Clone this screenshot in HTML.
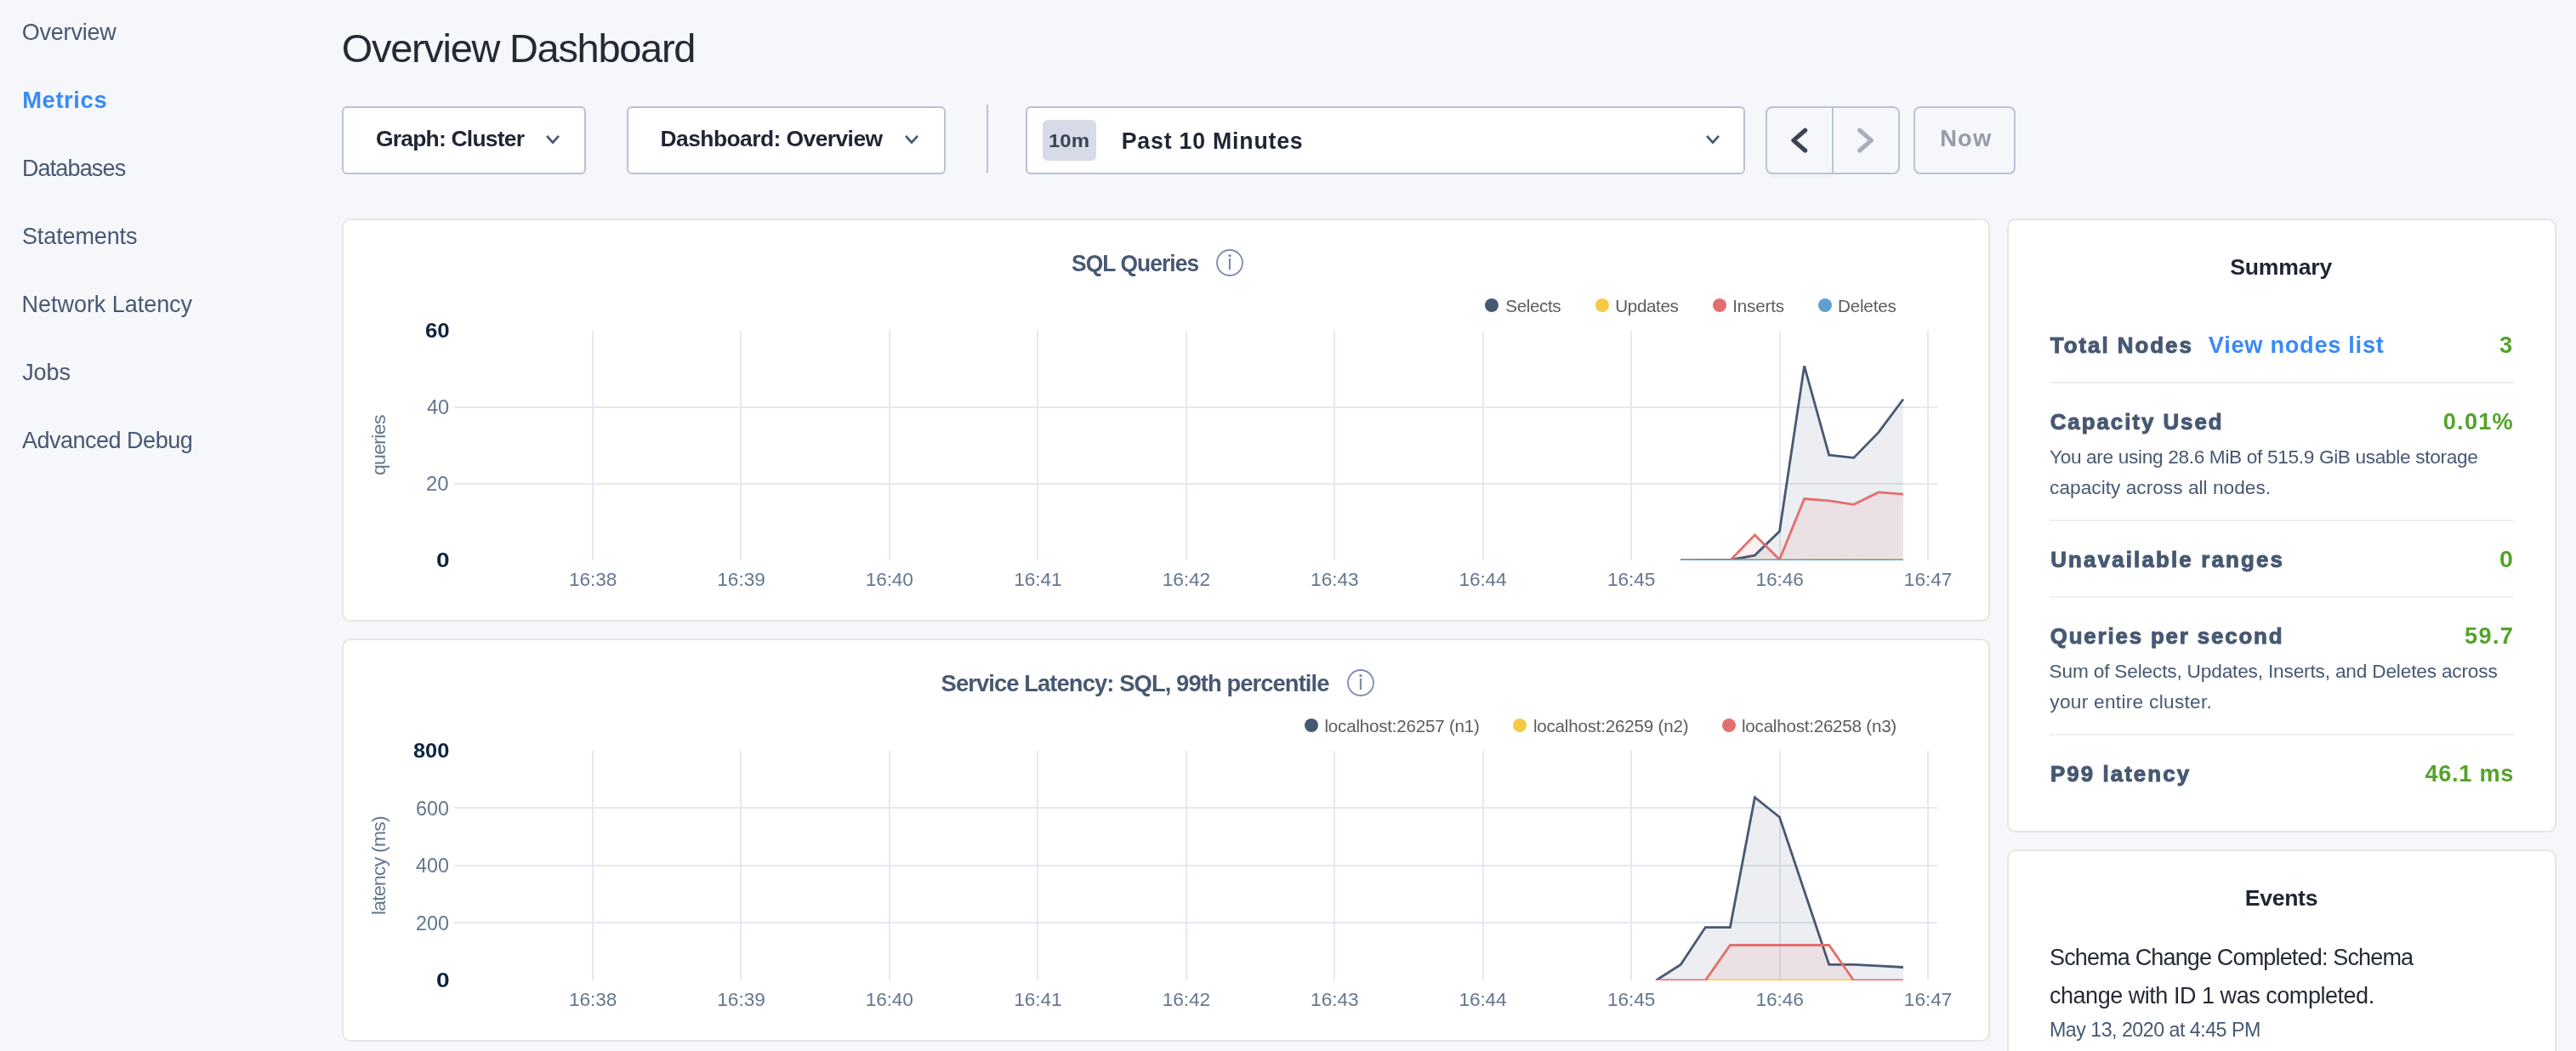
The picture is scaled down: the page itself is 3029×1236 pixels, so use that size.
<!DOCTYPE html>
<html lang="en">
<head>
<meta charset="utf-8">
<title>Overview Dashboard | Cockroach Console</title>
<style>
html,body{margin:0;padding:0}
html{width:3029px;height:1236px;overflow:hidden}
body{width:3029px;height:1236px;overflow:hidden;background:#f5f7fa;font-family:"Liberation Sans", sans-serif;position:relative}
.t{position:absolute;margin:0;white-space:nowrap;line-height:1;font-weight:400;text-decoration:none;transform-origin:0 0;display:block}
.ic{position:absolute;overflow:visible}
.box{position:absolute;box-sizing:border-box;background:#fff;border:2px solid #b9c1d6;border-radius:6px}
.card{position:absolute;box-sizing:border-box;background:#fff;border:2px solid #e5e5e6;border-radius:10px}
.hr{position:absolute;left:2410px;width:546px;height:2px;background:#efeff0}
.dot{position:absolute;width:16.2px;height:16.2px;border-radius:50%;display:block}
nav,main,section,header{display:block}
</style>
</head>
<body>
<nav style="will-change:transform;position:absolute;left:0;top:0;width:380px;height:1236px;overflow:hidden;z-index:1">
<a class="t" style="left:25.73px;top:25px;font-size:27.03px;color:#475872;letter-spacing:-0.215px;">Overview</a>
<a class="t" style="left:26.19px;top:104px;font-size:27.33px;color:#3a8af6;font-weight:700;letter-spacing:0.62px;">Metrics</a>
<a class="t" style="left:25.89px;top:185px;font-size:27.03px;color:#475872;letter-spacing:-0.858px;">Databases</a>
<a class="t" style="left:25.96px;top:265px;font-size:27.03px;color:#475872;letter-spacing:-0.125px;">Statements</a>
<a class="t" style="left:25.59px;top:345px;font-size:27.03px;color:#475872;letter-spacing:-0.05px;">Network Latency</a>
<a class="t" style="left:26.18px;top:425px;font-size:27.03px;color:#475872;letter-spacing:-0.109px;">Jobs</a>
<a class="t" style="left:26.0px;top:505px;font-size:27.03px;color:#475872;letter-spacing:-0.505px;">Advanced Debug</a>
</nav>
<main style="will-change:transform;position:absolute;left:0;top:0;width:3029px;height:1236px;overflow:hidden">
<header>
<h1 class="t" style="left:401.7px;top:34px;font-size:46.95px;color:#242a35;letter-spacing:-1.268px;">Overview Dashboard</h1>
</header>
<section class="toolbar">
<div class="box" style="left:402px;top:125px;width:287px;height:80px"></div>
<div class="box" style="left:737px;top:125px;width:375px;height:80px"></div>
<div style="position:absolute;left:1160px;top:123px;width:2px;height:80px;background:#b9c1d6"></div>
<div class="box" style="left:1206px;top:125px;width:846px;height:80px"></div>
<div style="position:absolute;left:1226.1px;top:140.9px;width:62.8px;height:48px;border-radius:6px;background:#d6dbe7"></div>
<div style="position:absolute;left:2078px;top:196px;width:77px;height:10px;border-radius:0 0 0 8px;box-shadow:0 3px 5px rgba(60,70,100,0.04)"></div>
<div class="box" style="left:2076px;top:125px;width:157.6px;height:80px;background:#f5f7fa;border-radius:8px;border-color:#bbc2d7"></div>
<div style="position:absolute;left:2154.1px;top:126px;width:1.8px;height:78px;background:#bac2d6"></div>
<div class="box" style="left:2250.2px;top:125px;width:119.4px;height:80px;background:#f5f7fa;border-radius:8px;border-color:#bbc2d7"></div>
<svg class="ic" style="left:638.0px;top:154.0px" width="24" height="20" viewBox="-12 -10 24 20"><path d="M-6.95 -4.15 L0 3.65 L6.95 -4.15" fill="none" stroke="#475872" stroke-width="2.8" stroke-linecap="butt" stroke-linejoin="round"/></svg>
<svg class="ic" style="left:1060.1px;top:154.0px" width="24" height="20" viewBox="-12 -10 24 20"><path d="M-6.95 -4.15 L0 3.65 L6.95 -4.15" fill="none" stroke="#475872" stroke-width="2.8" stroke-linecap="butt" stroke-linejoin="round"/></svg>
<svg class="ic" style="left:2002.0px;top:154.0px" width="24" height="20" viewBox="-12 -10 24 20"><path d="M-6.95 -4.15 L0 3.65 L6.95 -4.15" fill="none" stroke="#475872" stroke-width="2.8" stroke-linecap="butt" stroke-linejoin="round"/></svg>
<svg class="ic" style="left:2095px;top:140px" width="120" height="50" viewBox="2095 140 120 50">
<path d="M2122.6 153.2 L2108.9 165.1 L2122.6 177" fill="none" stroke="#394455" stroke-width="5.2" stroke-linecap="round" stroke-linejoin="round"/>
<path d="M2186.7 153.2 L2200.4 165.1 L2186.7 177" fill="none" stroke="#a9aeba" stroke-width="5.2" stroke-linecap="round" stroke-linejoin="round"/>
</svg>
<span class="t" style="left:441.97px;top:150px;font-size:26.45px;color:#1f2533;font-weight:700;letter-spacing:-0.775px;">Graph: Cluster</span>
<span class="t" style="left:776.55px;top:150px;font-size:26.45px;color:#1f2533;font-weight:700;letter-spacing:-0.571px;">Dashboard: Overview</span>
<span class="t" style="left:1232.8px;top:155px;font-size:22.09px;color:#394455;font-weight:700;transform:scaleX(1.0848);">10m</span>
<span class="t" style="left:1318.73px;top:153px;font-size:26.74px;color:#1f2533;font-weight:700;letter-spacing:0.782px;">Past 10 Minutes</span>
<span class="t" style="left:2281.19px;top:149px;font-size:27.33px;color:#959ca9;font-weight:700;letter-spacing:1.163px;">Now</span>
</section>
<section class="chart">
<div class="card" style="left:402px;top:257px;width:1938px;height:474px"></div>
<svg class="ic" style="left:0;top:0" width="3029" height="1236" viewBox="0 0 3029 1236"><path d="M696 389h2v270h-2z M870 389h2v270h-2z M1045 389h2v270h-2z M1219 389h2v270h-2z M1394 389h2v270h-2z M1568 389h2v270h-2z M1743 389h2v270h-2z M1917 389h2v270h-2z M2092 389h2v270h-2z M2266 389h2v270h-2z M534 478H2278v2H534z M534 568H2278v2H534z" fill="#e4e8f2" shape-rendering="crispEdges"/><clipPath id="clip0"><rect x="534" y="380" width="1750" height="279"/></clipPath><g clip-path="url(#clip0)"><polygon points="1976.2,659.0 2005.3,658.3 2034.4,658.5 2063.4,653.1 2092.5,624.8 2121.6,430.4 2150.7,535.2 2179.7,538.4 2208.8,508.7 2237.9,469.5 2237.9,659.0 1976.2,659.0" fill="#475872" fill-opacity="0.1"/><polygon points="1976.2,659.0 2005.3,659.0 2034.4,659.0 2063.4,659.0 2092.5,659.0 2121.6,659.0 2150.7,658.5 2179.7,658.8 2208.8,658.3 2237.9,658.8 2237.9,659.0 1976.2,659.0" fill="#f6c945" fill-opacity="0.1"/><polygon points="1976.2,659.0 2005.3,659.0 2034.4,659.0 2063.4,629.3 2092.5,658.1 2121.6,586.5 2150.7,588.8 2179.7,593.3 2208.8,578.9 2237.9,581.1 2237.9,659.0 1976.2,659.0" fill="#e26f6d" fill-opacity="0.1"/><polyline points="1976.2,659.0 2005.3,658.3 2034.4,658.5 2063.4,653.1 2092.5,624.8 2121.6,430.4 2150.7,535.2 2179.7,538.4 2208.8,508.7 2237.9,469.5" fill="none" stroke="#475872" stroke-width="2.8" stroke-linejoin="miter" stroke-linecap="butt"/><polyline points="1976.2,659.0 2005.3,659.0 2034.4,659.0 2063.4,659.0 2092.5,659.0 2121.6,659.0 2150.7,658.5 2179.7,658.8 2208.8,658.3 2237.9,658.8" fill="none" stroke="#f6c945" stroke-width="2.8" stroke-linejoin="miter" stroke-linecap="butt"/><polyline points="1976.2,659.0 2005.3,659.0 2034.4,659.0 2063.4,629.3 2092.5,658.1 2121.6,586.5 2150.7,588.8 2179.7,593.3 2208.8,578.9 2237.9,581.1" fill="none" stroke="#e26f6d" stroke-width="2.8" stroke-linejoin="miter" stroke-linecap="butt"/><polyline points="1976.2,659.0 2005.3,659.0 2034.4,659.0 2063.4,659.0 2092.5,659.0 2121.6,659.0 2150.7,659.0 2179.7,659.0 2208.8,659.0 2237.9,659.0" fill="none" stroke="#5f9fd2" stroke-width="2.8" stroke-linejoin="miter" stroke-linecap="butt"/></g></svg>
<svg class="ic" style="left:1427.9px;top:290.9px" width="36" height="36" viewBox="-18 -18 36 36"><circle cx="0" cy="0" r="15.0" fill="none" stroke="#7e8ab3" stroke-width="1.8"/><circle cx="0" cy="-8.4" r="1.7" fill="#7e8ab3"/><rect x="-1.1" y="-5.0" width="2.2" height="13.2" fill="#7e8ab3"/></svg>
<i class="dot" style="left:1745.8px;top:350.8px;background:#475872"></i><i class="dot" style="left:1875.7px;top:350.8px;background:#f6c945"></i><i class="dot" style="left:2014.0px;top:350.8px;background:#e26f6d"></i><i class="dot" style="left:2137.9px;top:350.8px;background:#5f9fd2"></i>
<h2 class="t" style="left:1259.79px;top:296px;font-size:27.33px;color:#475872;font-weight:700;letter-spacing:-0.957px;transform:scaleX(0.966);">SQL Queries</h2>
<span class="t" style="left:1770.36px;top:350px;font-size:20.64px;color:#5c5c5c;letter-spacing:-0.399px;">Selects</span>
<span class="t" style="left:1899.31px;top:350px;font-size:20.64px;color:#5c5c5c;letter-spacing:-0.39px;">Updates</span>
<span class="t" style="left:2037.19px;top:350px;font-size:20.64px;color:#5c5c5c;letter-spacing:-0.18px;">Inserts</span>
<span class="t" style="left:2160.99px;top:350px;font-size:20.64px;color:#5c5c5c;letter-spacing:-0.188px;">Deletes</span>
<span class="t" style="left:434.26px;top:558.9px;font-size:22.97px;color:#64778f;letter-spacing:-0.65px;transform:rotate(-90deg) scaleX(1.0);">queries</span>
<span class="t" style="left:499.79px;top:378px;font-size:23.26px;color:#0d2342;font-weight:700;transform:scaleX(1.1114);">60</span>
<span class="t" style="left:501.83px;top:468px;font-size:23.26px;color:#64778f;transform:scaleX(1.0149);">40</span>
<span class="t" style="left:501.48px;top:558px;font-size:23.26px;color:#64778f;transform:scaleX(1.0288);">20</span>
<span class="t" style="left:513.02px;top:648px;font-size:23.26px;color:#0d2342;font-weight:700;transform:scaleX(1.2071);">0</span>
<span class="t" style="left:668.88px;top:670px;font-size:22.67px;color:#64778f;letter-spacing:-0.049px;">16:38</span>
<span class="t" style="left:843.32px;top:670px;font-size:22.67px;color:#64778f;letter-spacing:-0.049px;">16:39</span>
<span class="t" style="left:1017.76px;top:670px;font-size:22.67px;color:#64778f;letter-spacing:-0.137px;">16:40</span>
<span class="t" style="left:1192.2px;top:670px;font-size:22.67px;color:#64778f;letter-spacing:-0.049px;">16:41</span>
<span class="t" style="left:1366.64px;top:670px;font-size:22.67px;color:#64778f;letter-spacing:-0.049px;">16:42</span>
<span class="t" style="left:1541.08px;top:670px;font-size:22.67px;color:#64778f;letter-spacing:-0.049px;">16:43</span>
<span class="t" style="left:1715.52px;top:670px;font-size:22.67px;color:#64778f;letter-spacing:-0.137px;">16:44</span>
<span class="t" style="left:1889.96px;top:670px;font-size:22.67px;color:#64778f;letter-spacing:-0.049px;">16:45</span>
<span class="t" style="left:2064.4px;top:670px;font-size:22.67px;color:#64778f;letter-spacing:-0.049px;">16:46</span>
<span class="t" style="left:2238.84px;top:670px;font-size:22.67px;color:#64778f;letter-spacing:-0.049px;">16:47</span>
</section>
<section class="chart">
<div class="card" style="left:402px;top:751px;width:1938px;height:474px"></div>
<svg class="ic" style="left:0;top:0" width="3029" height="1236" viewBox="0 0 3029 1236"><path d="M696 883h2v270h-2z M870 883h2v270h-2z M1045 883h2v270h-2z M1219 883h2v270h-2z M1394 883h2v270h-2z M1568 883h2v270h-2z M1743 883h2v270h-2z M1917 883h2v270h-2z M2092 883h2v270h-2z M2266 883h2v270h-2z M534 949H2278v2H534z M534 1017H2278v2H534z M534 1084H2278v2H534z" fill="#e4e8f2" shape-rendering="crispEdges"/><clipPath id="clip494"><rect x="534" y="874" width="1750" height="279"/></clipPath><g clip-path="url(#clip494)"><polygon points="1947.2,1153.0 1976.2,1134.4 2005.3,1090.6 2034.4,1090.6 2063.4,937.7 2092.5,961.0 2121.6,1047.7 2150.7,1134.4 2179.7,1134.4 2208.8,1135.8 2237.9,1137.5 2237.9,1153.0 1947.2,1153.0" fill="#475872" fill-opacity="0.1"/><polygon points="1947.2,1153.0 1976.2,1153.0 2005.3,1153.0 2034.4,1111.5 2063.4,1111.5 2092.5,1111.5 2121.6,1111.5 2150.7,1111.5 2179.7,1153.0 2208.8,1153.0 2237.9,1153.0 2237.9,1153.0 1947.2,1153.0" fill="#e26f6d" fill-opacity="0.1"/><polyline points="1947.2,1153.0 1976.2,1134.4 2005.3,1090.6 2034.4,1090.6 2063.4,937.7 2092.5,961.0 2121.6,1047.7 2150.7,1134.4 2179.7,1134.4 2208.8,1135.8 2237.9,1137.5" fill="none" stroke="#475872" stroke-width="2.8" stroke-linejoin="miter" stroke-linecap="butt"/><polyline points="2005.3,1153.0 2034.4,1153.0 2063.4,1153.0 2092.5,1153.0 2121.6,1153.0 2150.7,1153.0 2179.7,1153.0" fill="none" stroke="#f6c945" stroke-width="2.8" stroke-linejoin="miter" stroke-linecap="butt"/><polyline points="1947.2,1153.0 1976.2,1153.0 2005.3,1153.0 2034.4,1111.5 2063.4,1111.5 2092.5,1111.5 2121.6,1111.5 2150.7,1111.5 2179.7,1153.0 2208.8,1153.0 2237.9,1153.0" fill="none" stroke="#e26f6d" stroke-width="2.8" stroke-linejoin="miter" stroke-linecap="butt"/></g></svg>
<svg class="ic" style="left:1582.0px;top:784.9px" width="36" height="36" viewBox="-18 -18 36 36"><circle cx="0" cy="0" r="15.0" fill="none" stroke="#7e8ab3" stroke-width="1.8"/><circle cx="0" cy="-8.4" r="1.7" fill="#7e8ab3"/><rect x="-1.1" y="-5.0" width="2.2" height="13.2" fill="#7e8ab3"/></svg>
<i class="dot" style="left:1534.1px;top:844.8px;background:#475872"></i><i class="dot" style="left:1779.3px;top:844.8px;background:#f6c945"></i><i class="dot" style="left:2024.8px;top:844.8px;background:#e26f6d"></i>
<h2 class="t" style="left:1106.57px;top:790px;font-size:27.33px;color:#475872;font-weight:700;letter-spacing:-0.894px;">Service Latency: SQL, 99th percentile</h2>
<span class="t" style="left:1557.51px;top:844px;font-size:20.64px;color:#5c5c5c;letter-spacing:-0.235px;">localhost:26257 (n1)</span>
<span class="t" style="left:1802.91px;top:844px;font-size:20.64px;color:#5c5c5c;letter-spacing:-0.22px;">localhost:26259 (n2)</span>
<span class="t" style="left:2048.01px;top:844px;font-size:20.64px;color:#5c5c5c;letter-spacing:-0.246px;">localhost:26258 (n3)</span>
<span class="t" style="left:434.26px;top:1075.6px;font-size:22.97px;color:#64778f;letter-spacing:-0.769px;transform:rotate(-90deg) scaleX(1.0);">latency (ms)</span>
<span class="t" style="left:486.21px;top:872px;font-size:23.26px;color:#0d2342;font-weight:700;transform:scaleX(1.0905);">800</span>
<span class="t" style="left:489.1px;top:940px;font-size:23.26px;color:#64778f;transform:scaleX(1.0043);">600</span>
<span class="t" style="left:489.14px;top:1007px;font-size:23.26px;color:#64778f;transform:scaleX(1.0035);">400</span>
<span class="t" style="left:489.1px;top:1075px;font-size:23.26px;color:#64778f;transform:scaleX(1.0043);">200</span>
<span class="t" style="left:513.02px;top:1142px;font-size:23.26px;color:#0d2342;font-weight:700;transform:scaleX(1.2071);">0</span>
<span class="t" style="left:668.88px;top:1164px;font-size:22.67px;color:#64778f;letter-spacing:-0.049px;">16:38</span>
<span class="t" style="left:843.32px;top:1164px;font-size:22.67px;color:#64778f;letter-spacing:-0.049px;">16:39</span>
<span class="t" style="left:1017.76px;top:1164px;font-size:22.67px;color:#64778f;letter-spacing:-0.137px;">16:40</span>
<span class="t" style="left:1192.2px;top:1164px;font-size:22.67px;color:#64778f;letter-spacing:-0.049px;">16:41</span>
<span class="t" style="left:1366.64px;top:1164px;font-size:22.67px;color:#64778f;letter-spacing:-0.049px;">16:42</span>
<span class="t" style="left:1541.08px;top:1164px;font-size:22.67px;color:#64778f;letter-spacing:-0.049px;">16:43</span>
<span class="t" style="left:1715.52px;top:1164px;font-size:22.67px;color:#64778f;letter-spacing:-0.137px;">16:44</span>
<span class="t" style="left:1889.96px;top:1164px;font-size:22.67px;color:#64778f;letter-spacing:-0.049px;">16:45</span>
<span class="t" style="left:2064.4px;top:1164px;font-size:22.67px;color:#64778f;letter-spacing:-0.049px;">16:46</span>
<span class="t" style="left:2238.84px;top:1164px;font-size:22.67px;color:#64778f;letter-spacing:-0.049px;">16:47</span>
</section>
<section class="summary">
<div class="card" style="left:2360px;top:257px;width:646px;height:722px"></div>
<div class="hr" style="top:449px"></div>
<div class="hr" style="top:611px"></div>
<div class="hr" style="top:701px"></div>
<div class="hr" style="top:863px"></div>
<h2 class="t" style="left:2622.28px;top:301px;font-size:26.6px;color:#1f2533;font-weight:700;letter-spacing:-0.198px;">Summary</h2>
<span class="t" style="left:2410.8px;top:394px;font-size:25.87px;color:#475872;font-weight:700;letter-spacing:2.002px;-webkit-text-stroke:1px currentColor;">Total Nodes</span>
<a class="t" style="left:2596.8px;top:392px;font-size:27.18px;color:#3a8af6;font-weight:700;letter-spacing:0.727px;">View nodes list</a>
<span class="t" style="left:2939.27px;top:392px;font-size:27.18px;color:#54a32b;font-weight:700;transform:scaleX(1.0061);">3</span>
<span class="t" style="left:2410.69px;top:484px;font-size:25.87px;color:#475872;font-weight:700;letter-spacing:1.973px;-webkit-text-stroke:1px currentColor;">Capacity Used</span>
<span class="t" style="left:2872.75px;top:482px;font-size:27.18px;color:#54a32b;font-weight:700;letter-spacing:1.242px;">0.01%</span>
<span class="t" style="left:2409.95px;top:526px;font-size:22.67px;color:#475872;letter-spacing:-0.342px;">You are using 28.6 MiB of 515.9 GiB usable storage</span>
<span class="t" style="left:2410.09px;top:562px;font-size:22.67px;color:#475872;letter-spacing:0.023px;">capacity across all nodes.</span>
<span class="t" style="left:2411.29px;top:646px;font-size:25.87px;color:#475872;font-weight:700;letter-spacing:2.168px;-webkit-text-stroke:1px currentColor;">Unavailable ranges</span>
<span class="t" style="left:2939.0px;top:644px;font-size:27.18px;color:#54a32b;font-weight:700;transform:scaleX(1.0558);">0</span>
<span class="t" style="left:2410.69px;top:736px;font-size:25.87px;color:#475872;font-weight:700;letter-spacing:1.842px;-webkit-text-stroke:1px currentColor;">Queries per second</span>
<span class="t" style="left:2898.08px;top:734px;font-size:27.18px;color:#54a32b;font-weight:700;letter-spacing:1.309px;">59.7</span>
<span class="t" style="left:2409.59px;top:778px;font-size:22.67px;color:#475872;letter-spacing:-0.182px;">Sum of Selects, Updates, Inserts, and Deletes across</span>
<span class="t" style="left:2410.3px;top:814px;font-size:22.67px;color:#475872;letter-spacing:0.286px;">your entire cluster.</span>
<span class="t" style="left:2410.88px;top:898px;font-size:25.87px;color:#475872;font-weight:700;letter-spacing:2.088px;-webkit-text-stroke:1px currentColor;">P99 latency</span>
<span class="t" style="left:2851.4px;top:896px;font-size:27.18px;color:#54a32b;font-weight:700;letter-spacing:0.728px;">46.1 ms</span>
</section>
<section class="events">
<div class="card" style="left:2360px;top:999px;width:646px;height:300px"></div>
<h2 class="t" style="left:2639.74px;top:1043px;font-size:26.6px;color:#1f2533;font-weight:700;letter-spacing:-0.298px;">Events</h2>
<span class="t" style="left:2409.96px;top:1113px;font-size:27.03px;color:#242a35;letter-spacing:-0.846px;">Schema Change Completed: Schema</span>
<span class="t" style="left:2409.96px;top:1158px;font-size:27.03px;color:#242a35;letter-spacing:-0.475px;">change with ID 1 was completed.</span>
<span class="t" style="left:2409.98px;top:1200px;font-size:23.26px;color:#475872;letter-spacing:-0.523px;">May 13, 2020 at 4:45 PM</span>
</section>
</main>
</body>
</html>
